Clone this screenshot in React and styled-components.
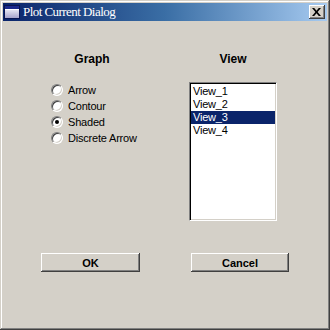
import React, { useState } from 'react'
import styled, { createGlobalStyle } from 'styled-components'

const GlobalStyle = createGlobalStyle`
  html, body {
    margin: 0;
    padding: 0;
    background: #d4d0c8;
  }
  body {
    font-family: "Liberation Sans", Arial, sans-serif;
  }
`

const Window = styled.div`
  width: 330px;
  height: 330px;
  box-sizing: border-box;
  padding: 3px;
  background: #d4d0c8;
  box-shadow:
    inset -1px -1px #404040,
    inset 1px 1px #d4d0c8,
    inset -2px -2px #808080,
    inset 2px 2px #ffffff;
  display: flex;
  flex-direction: column;
`

const TitleBar = styled.div`
  height: 18px;
  display: flex;
  align-items: center;
  padding: 0 2px 0 1px;
  background: linear-gradient(to right, #0a246a 0%, #3a6ea5 50%, #a6caf0 100%);
`

const Title = styled.span`
  flex: 1;
  margin-left: 3px;
  color: #fff;
  font-family: "Liberation Serif", "Times New Roman", serif;
  font-size: 13px;
  letter-spacing: -0.55px;
  line-height: 18px;
  white-space: nowrap;
`

const RaisedButton = styled.button`
  box-sizing: border-box;
  border: none;
  padding: 0;
  margin: 0;
  background: #d4d0c8;
  color: #000;
  box-shadow:
    inset -1px -1px #404040,
    inset 1px 1px #ffffff,
    inset -2px -2px #808080,
    inset 2px 2px #d4d0c8;
  display: flex;
  align-items: center;
  justify-content: center;
`

const CloseButton = styled(RaisedButton)`
  width: 16px;
  height: 14px;
  padding: 0 1px 1px 0;
`

const Body = styled.div`
  flex: 1;
  display: flex;
  flex-direction: column;
  padding: 31px 0 0 37px;
`

const Columns = styled.div`
  display: flex;
  gap: 45px;
  align-items: flex-start;
`

const Column = styled.div`
  width: ${p => p.$width}px;
  display: flex;
  flex-direction: column;
`

const Label = styled.div`
  font-weight: bold;
  font-size: 12px;
  line-height: 14px;
  text-align: center;
  margin-bottom: 16px;
`

const RadioGroup = styled.div`
  display: flex;
  flex-direction: column;
  padding-left: 11px;
`

const RadioRow = styled.label`
  height: 16px;
  display: flex;
  align-items: center;
  gap: 5px;
  font-size: 11px;
  letter-spacing: -0.2px;
  cursor: default;
`

const RadioCircle = styled.span`
  width: 12px;
  height: 12px;
  box-sizing: border-box;
  border-radius: 50%;
  border: 1px solid;
  border-color: #808080 #ffffff #ffffff #808080;
  background: #fff;
  box-shadow: inset 1px 1px #404040, inset -1px -1px #d4d0c8;
  display: flex;
  align-items: center;
  justify-content: center;

  &::after {
    content: '';
    width: 4px;
    height: 4px;
    border-radius: 50%;
    background: ${p => (p.$checked ? '#000' : 'transparent')};
  }
`

const ListBox = styled.div`
  box-sizing: border-box;
  height: 139px;
  background: #fff;
  border: 1px solid;
  border-color: #808080 #ffffff #ffffff #808080;
  box-shadow: inset 1px 1px #000, inset -1px -1px #d4d0c8;
  display: flex;
  flex-direction: column;
  padding: 2px 1px 0 1px;
`

const ListItem = styled.div`
  height: 13px;
  line-height: 13px;
  padding-left: 2px;
  font-size: 11px;
  letter-spacing: -0.2px;
  background: ${p => (p.$selected ? '#0a246a' : 'transparent')};
  color: ${p => (p.$selected ? '#fff' : '#000')};
`

const ButtonRow = styled.div`
  display: flex;
  gap: 51px;
  margin-top: 32px;
  padding-left: 1px;
`

const DialogButton = styled(RaisedButton)`
  width: ${p => p.$width}px;
  height: 19px;
  font-family: "Liberation Sans", Arial, sans-serif;
  font-weight: bold;
  font-size: 11px;
`

const AppIcon = () => (
  <svg width="16" height="14" viewBox="0 0 16 14">
    <rect x="0.5" y="0.5" width="15" height="13" fill="#e8e8f4" stroke="#0a1450" />
    <rect x="1" y="1" width="14" height="3" fill="#1c2a8c" />
    <rect x="1" y="4" width="14" height="1" fill="#ffffff" />
    <defs>
      <linearGradient id="ig" x1="0" y1="0" x2="0" y2="1">
        <stop offset="0" stopColor="#e6e4f2" />
        <stop offset="1" stopColor="#a8a4cc" />
      </linearGradient>
    </defs>
    <rect x="1" y="5" width="14" height="8" fill="url(#ig)" />
  </svg>
)

const CloseIcon = () => (
  <svg width="9" height="8" viewBox="0 0 9 8">
    <path d="M0 0h2.2l2.3 2.7L6.8 0H9L5.6 4 9 8H6.8L4.5 5.3 2.2 8H0l3.4-4z" fill="#000" />
  </svg>
)

const graphTypes = ['Arrow', 'Contour', 'Shaded', 'Discrete Arrow']
const views = ['View_1', 'View_2', 'View_3', 'View_4']

const App = () => {
  const [graph, setGraph] = useState('Shaded')
  const [view, setView] = useState('View_3')

  return (
    <>
      <GlobalStyle />
      <Window>
        <TitleBar>
          <AppIcon />
          <Title>Plot Current Dialog</Title>
          <CloseButton><CloseIcon /></CloseButton>
        </TitleBar>
        <Body>
          <Columns>
            <Column $width={104}>
              <Label>Graph</Label>
              <RadioGroup>
                {graphTypes.map(g => (
                  <RadioRow key={g} onClick={() => setGraph(g)}>
                    <RadioCircle $checked={graph === g} />
                    {g}
                  </RadioRow>
                ))}
              </RadioGroup>
            </Column>
            <Column $width={88}>
              <Label>View</Label>
              <ListBox>
                {views.map(v => (
                  <ListItem key={v} $selected={view === v} onClick={() => setView(v)}>
                    {v}
                  </ListItem>
                ))}
              </ListBox>
            </Column>
          </Columns>
          <ButtonRow>
            <DialogButton $width={99}>OK</DialogButton>
            <DialogButton $width={98}>Cancel</DialogButton>
          </ButtonRow>
        </Body>
      </Window>
    </>
  )
}

export default App
